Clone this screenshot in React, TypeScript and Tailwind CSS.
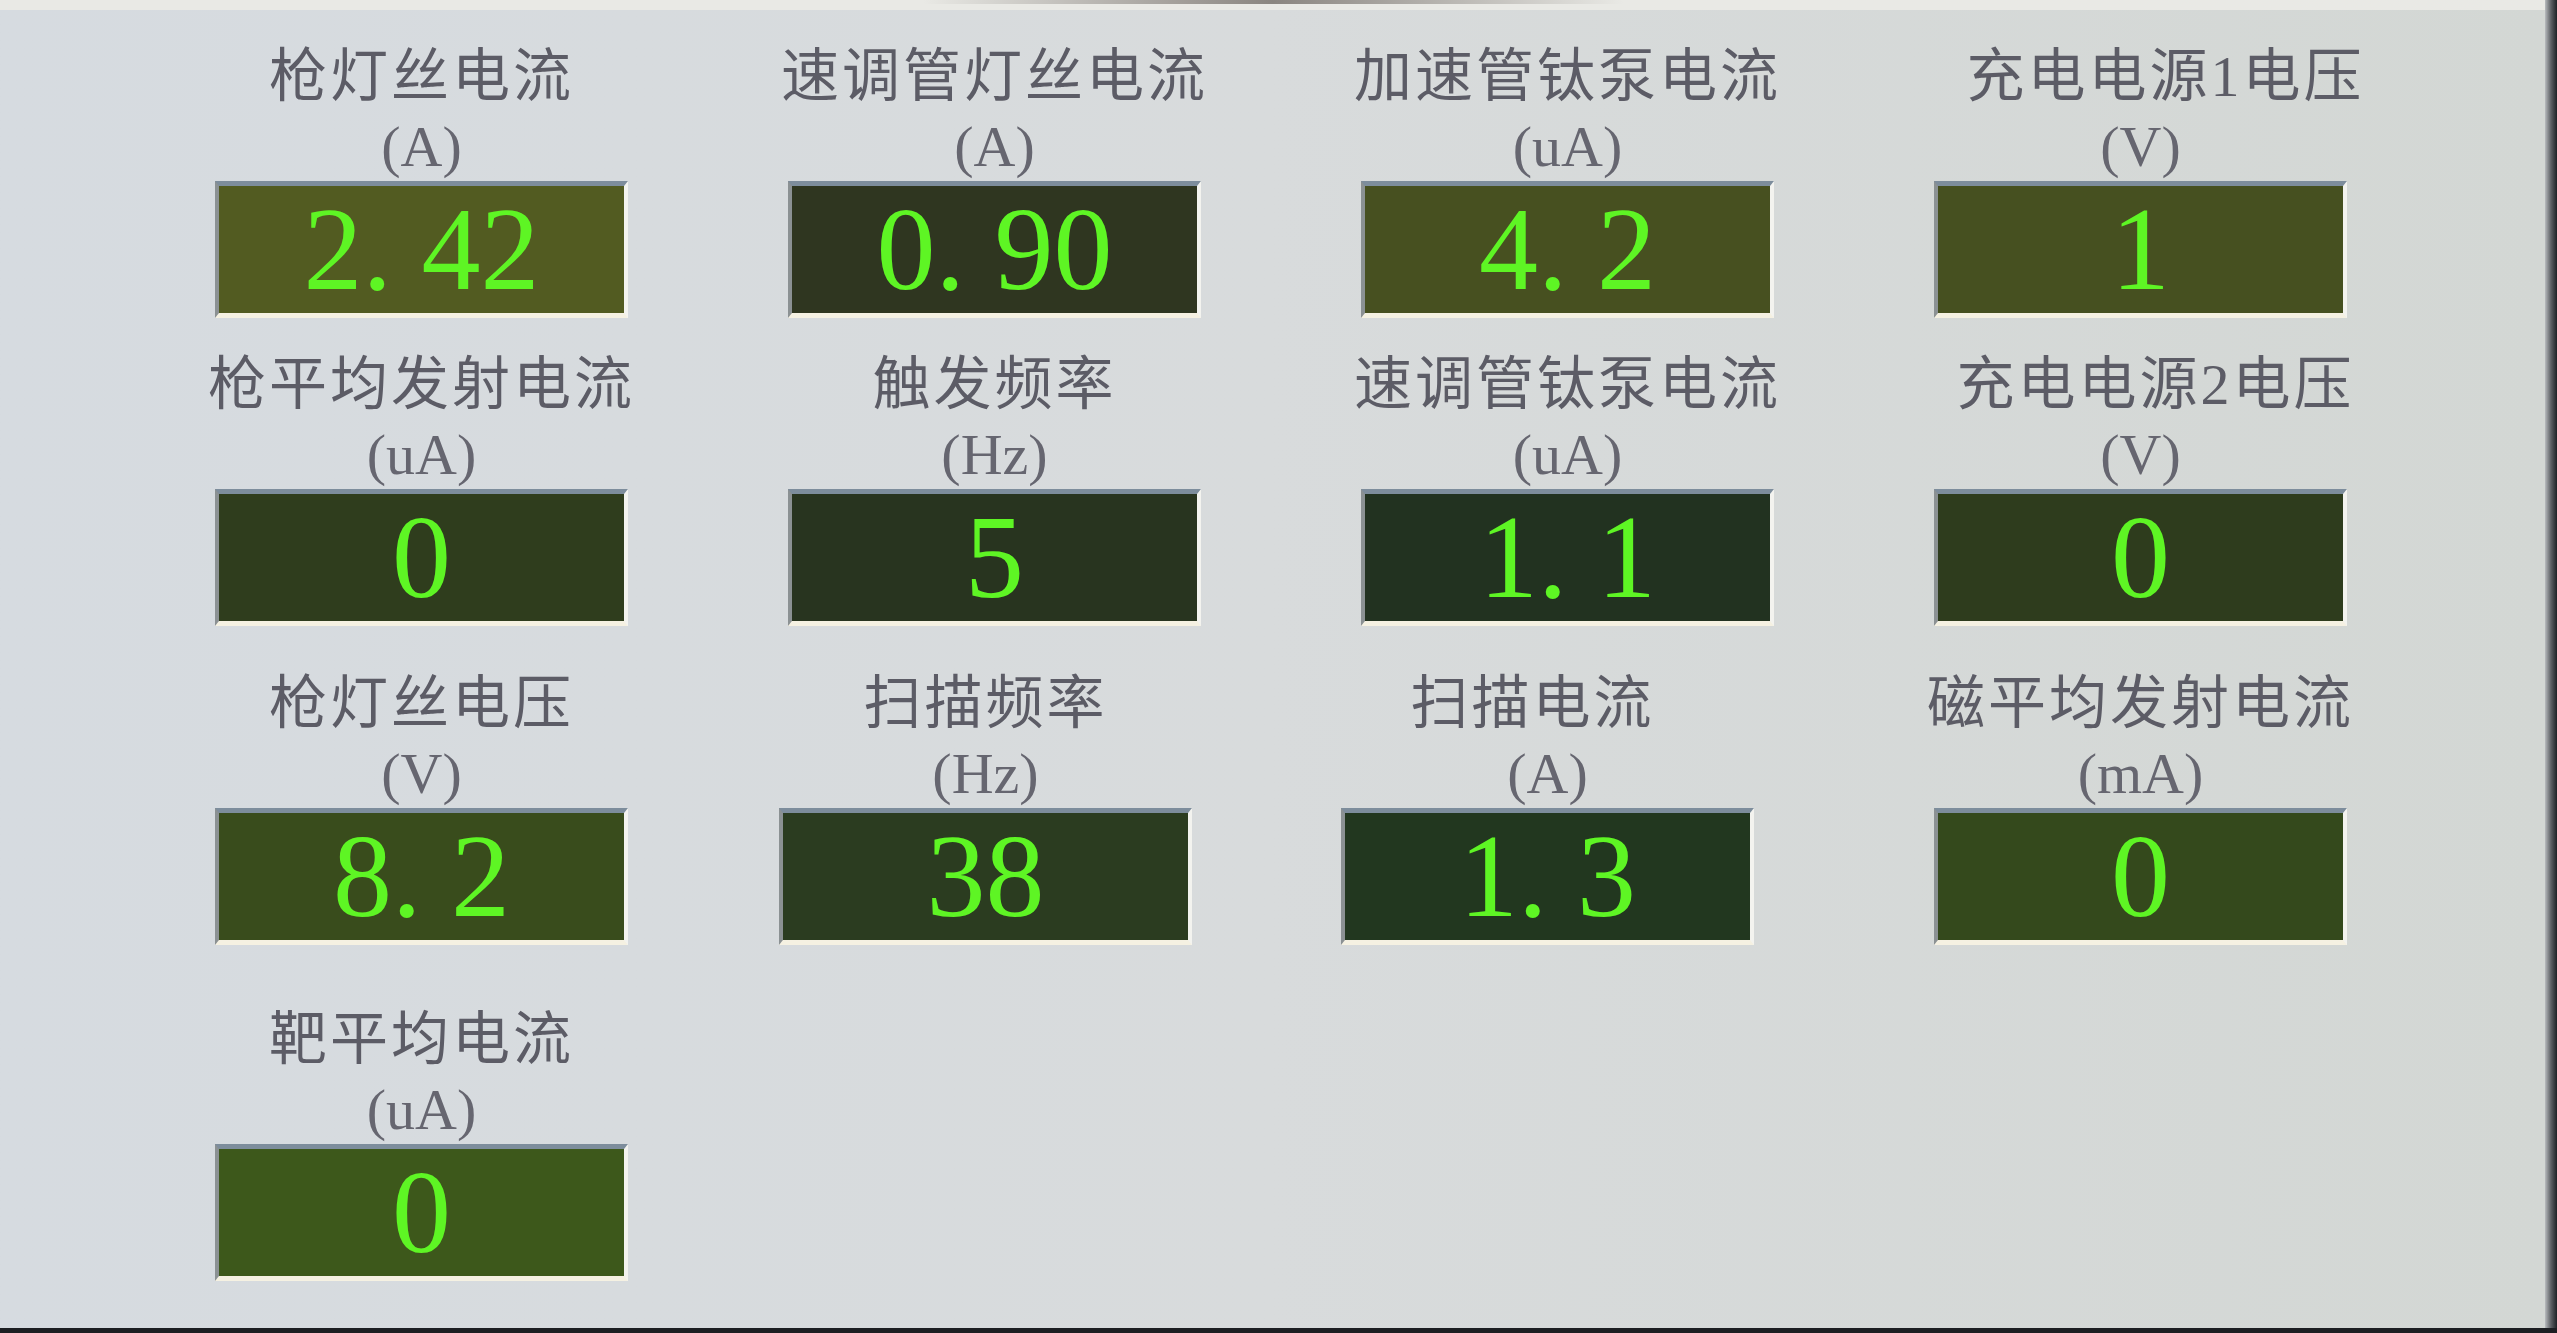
import React from "react";

type Reading = {
  title: string;
  unit: string;
  value: string;
  bg: string;
  shift?: string; // small nudge of the whole cell
  titleShift?: string;
};

const rows: { gap: string; items: Reading[] }[] = [
  {
    gap: "mt-[35px]",
    items: [
      { title: "枪灯丝电流", unit: "(A)", value: "2. 42", bg: "bg-[#525b21]" },
      { title: "速调管灯丝电流", unit: "(A)", value: "0. 90", bg: "bg-[#2f3620]" },
      { title: "加速管钛泵电流", unit: "(uA)", value: "4. 2", bg: "bg-[#475020]" },
      { title: "充电电源1电压", unit: "(V)", value: "1", bg: "bg-[#465020]", titleShift: "ml-[50px]" },
    ],
  },
  {
    gap: "mt-[35px]",
    items: [
      { title: "枪平均发射电流", unit: "(uA)", value: "0", bg: "bg-[#2f3d1d]" },
      { title: "触发频率", unit: "(Hz)", value: "5", bg: "bg-[#28341f]" },
      { title: "速调管钛泵电流", unit: "(uA)", value: "1. 1", bg: "bg-[#223220]" },
      { title: "充电电源2电压", unit: "(V)", value: "0", bg: "bg-[#2e3c1d]", titleShift: "ml-[30px]" },
    ],
  },
  {
    gap: "mt-[46px]",
    items: [
      { title: "枪灯丝电压", unit: "(V)", value: "8. 2", bg: "bg-[#394c1c]" },
      { title: "扫描频率", unit: "(Hz)", value: "38", bg: "bg-[#2b3c20]", shift: "mr-[18px]" },
      { title: "扫描电流", unit: "(A)", value: "1. 3", bg: "bg-[#22371f]", shift: "mr-[40px]", titleShift: "mr-[30px]" },
      { title: "磁平均发射电流", unit: "(mA)", value: "0", bg: "bg-[#34491c]" },
    ],
  },
  {
    gap: "mt-[63px]",
    items: [
      { title: "靶平均电流", unit: "(uA)", value: "0", bg: "bg-[#3d581b]" },
    ],
  },
];

function Gauge({ item }: { item: Reading }) {
  return (
    <div className={`flex flex-col items-center ${item.shift ?? ""}`}>
      <div
        className={`h-[64px] whitespace-nowrap text-[58px] font-normal leading-[64px] tracking-[3px] text-[#5c5c66] font-['Liberation_Serif','Noto_Sans_CJK_SC',serif] ${item.titleShift ?? ""}`}
      >
        {item.title}
      </div>
      <div className="mt-[6px] h-[64px] whitespace-nowrap text-[58px] leading-[64px] text-[#666670] font-['Liberation_Serif',serif]">
        {item.unit}
      </div>
      <div
        className={`mt-[2px] flex h-[137px] w-[413px] items-center justify-center border-t-[5px] border-r-[4px] border-b-[5px] border-l-[4px] border-t-[#7d8d9c] border-r-[#f3f3ef] border-b-[#f5f1e2] border-l-[#8b9193] ${item.bg}`}
      >
        <span className="whitespace-pre text-[118px] leading-none text-[#5ef524] font-['Liberation_Serif',serif]">
          {item.value}
        </span>
      </div>
    </div>
  );
}

export default function App() {
  return (
    <div className="flex h-[1333px] w-[2557px] flex-col overflow-hidden bg-[#d5d9db]">
      <div className="flex flex-1">
        <div className="flex flex-1 flex-col bg-gradient-to-r from-[#d6dbe0] via-[#d8dbdc] to-[#d3d7d4]">
          <div className="flex h-[10px] justify-center bg-[#e9e9e5]">
            <div className="h-[4px] w-[700px] bg-gradient-to-r from-[#e9e9e5] via-[#8a8580] to-[#e9e9e5]" />
          </div>

          <div className="pl-[135px]">
            {rows.map((row, r) => (
              <div key={r} className={`grid w-[2292px] grid-cols-4 ${row.gap}`}>
                {row.items.map((item) => (
                  <Gauge key={item.title} item={item} />
                ))}
              </div>
            ))}
          </div>
        </div>

        {/* screen bezel, right */}
        <div className="w-[12px] bg-gradient-to-r from-[#b9bcbf] via-[#5d6064] to-[#1f2226]" />
      </div>

      {/* screen bezel, bottom */}
      <div className="h-[5px] bg-[#1c1e22]" />
    </div>
  );
}
